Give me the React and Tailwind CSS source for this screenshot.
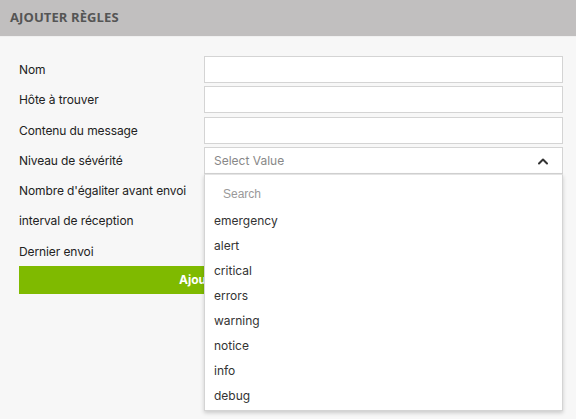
import React from "react";

const rows = [
  { label: "Nom", top: "mt-0" },
  { label: "Hôte à trouver", top: "mt-[3px]" },
  { label: "Contenu du message", top: "mt-[4px]" },
  { label: "Niveau de sévérité", top: "mt-[3px]", select: true },
  { label: "Nombre d'égaliter avant envoi", top: "mt-[3px]" },
  { label: "interval de réception", top: "mt-[3px]" },
  { label: "Dernier envoi", top: "mt-[4px]" },
];

const options = ["emergency", "alert", "critical", "errors", "warning", "notice", "info", "debug"];

function Chevron() {
  return (
    <svg width="12" height="8" viewBox="0 0 12 8" fill="none">
      <path d="M2 6.5 L6 2.5 L10 6.5" stroke="#333" strokeWidth="2" strokeLinecap="round" strokeLinejoin="round" />
    </svg>
  );
}

export default function App() {
  return (
    <div className="w-[576px] h-[419px] overflow-hidden bg-[#f7f7f7] font-['Inter',sans-serif]">
      <div className="h-[37px] bg-[#c1bfbf] flex items-center px-[10px] border-b border-[#f0f0f0]">
        <span className="font-['Open_Sans',sans-serif] font-bold text-[13px] text-[#555] tracking-[0.1px]">AJOUTER RÈGLES</span>
      </div>
      <div className="relative pl-[19px] pr-[13px] pt-[19px]">
        {rows.map((r, i) => (
          <div key={i} className={`flex items-center h-[27px] ${r.top}`}>
            <div className="w-[185px] text-[12px] tracking-[-0.1px] text-[#222] leading-none">{r.label}</div>
            <div className="flex-1 h-full bg-white border border-[#d4d4d4] flex items-center justify-between pl-[9px] pr-[13px]">
              {r.select && (
                <>
                  <span className="text-[12px] text-[#888]">Select Value</span>
                  <Chevron />
                </>
              )}
            </div>
          </div>
        ))}
        <div className="h-[28px] mt-px bg-[#7fba00] flex items-center pl-[160px] text-white font-bold text-[12px]">
          Ajouter
        </div>
        <div className="absolute left-[204px] top-[137px] w-[359px] h-[237px] bg-white border border-[#d4d4d4] border-t-[#e4e4e4] shadow-[0_2px_4px_rgba(0,0,0,0.18)]">
          <div className="h-[33px] pt-[5px] pl-[18px] flex items-center font-['Liberation_Sans',sans-serif] text-[12px] text-[#999]">
            Search
          </div>
          {options.map((o) => (
            <div key={o} className="h-[25px] flex items-center pl-[9px] text-[12px] text-[#333]">
              {o}
            </div>
          ))}
        </div>
      </div>
    </div>
  );
}
